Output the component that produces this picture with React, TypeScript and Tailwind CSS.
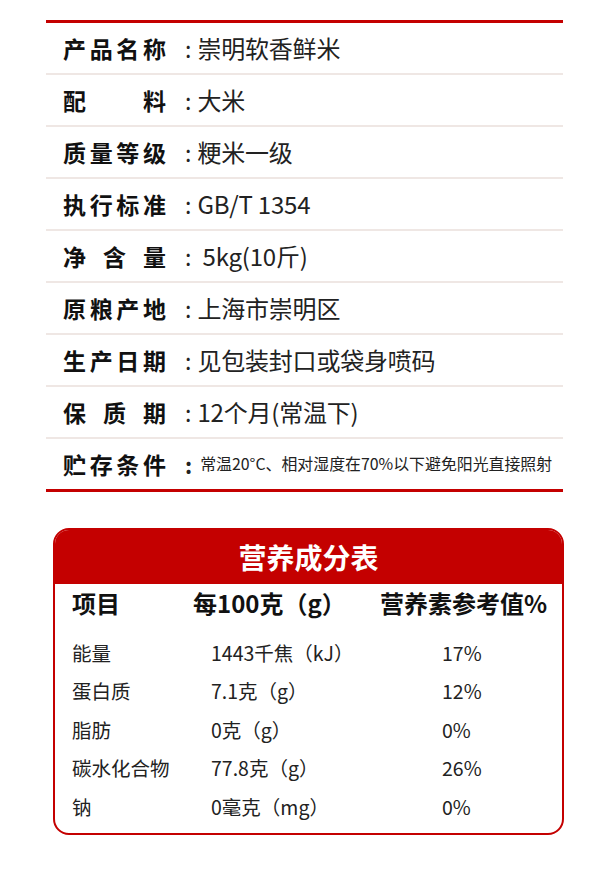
const font = "font-['Noto_Sans_CJK_SC','Noto_Sans',sans-serif]";

const info: { label: string[]; value: string; small?: boolean }[] = [
  { label: ['产', '品', '名', '称'], value: '崇明软香鲜米' },
  { label: ['配', '料'], value: '大米' },
  { label: ['质', '量', '等', '级'], value: '粳米一级' },
  { label: ['执', '行', '标', '准'], value: 'GB/T 1354' },
  { label: ['净', '含', '量'], value: ' 5kg(10斤)' },
  { label: ['原', '粮', '产', '地'], value: '上海市崇明区' },
  { label: ['生', '产', '日', '期'], value: '见包装封口或袋身喷码' },
  { label: ['保', '质', '期'], value: '12个月(常温下)' },
  { label: ['贮', '存', '条', '件'], value: '常温20°C、相对湿度在70%以下避免阳光直接照射', small: true },
];

const nutrition = [
  ['能量', '1443千焦（kJ）', '17%'],
  ['蛋白质', '7.1克（g）', '12%'],
  ['脂肪', '0克（g）', '0%'],
  ['碳水化合物', '77.8克（g）', '26%'],
  ['钠', '0毫克（mg）', '0%'],
];

export default function App() {
  return (
    <div className={`w-[600px] h-[871px] bg-white ${font} overflow-hidden`}>
      {/* Product info */}
      <div className="ml-[46px] w-[517px] pt-[20px]">
        <div className="h-[3px] bg-[#c40000]" />
        {info.map((row, i) => (
          <div
            key={i}
            className={`flex items-center pl-[17px] ${
              i < info.length - 1 ? 'h-[52px] border-b-2 border-[#efe7e4]' : 'h-[50px]'
            }`}
          >
            <div className="w-[103px] flex justify-between text-[23px] font-bold text-[#111] leading-none">
              {row.label.map((c, j) => (
                <span key={j}>{c}</span>
              ))}
            </div>
            <span
              className={`ml-[19px] text-[#222] leading-none ${
                row.small ? 'text-[22px] font-bold mr-[8px]' : 'text-[23px] mr-[6px]'
              }`}
            >
              :
            </span>
            <span
              className={`text-[#222] leading-none whitespace-pre ${
                row.small ? 'text-[15.9px]' : 'text-[24px] tracking-[-0.2px]'
              }`}
            >
              {row.value}
            </span>
          </div>
        ))}
        <div className="h-[3px] bg-[#c40000]" />
      </div>

      {/* Nutrition table */}
      <div className="ml-[53px] mt-[36px] w-[511px] h-[307px] rounded-[16px] border-2 border-[#c40000] overflow-hidden">
        <div className="h-[54px] bg-[#c40000] flex items-center justify-center text-white text-[28px] font-bold">
          营养成分表
        </div>
        <div className="flex items-center h-[38px] text-[24px] font-bold text-[#111]">
          <span className="w-[138px] pl-[17px]">项目</span>
          <span className="w-[187px]">每100克（g）</span>
          <span>营养素参考值%</span>
        </div>
        <div className="pt-[11px]">
          {nutrition.map((r, i) => (
            <div key={i} className="flex items-center h-[38.6px] text-[19.5px] text-[#222]">
              <span className="w-[156px] pl-[17px]">{r[0]}</span>
              <span className="w-[231px]">{r[1]}</span>
              <span>{r[2]}</span>
            </div>
          ))}
        </div>
      </div>
    </div>
  );
}
